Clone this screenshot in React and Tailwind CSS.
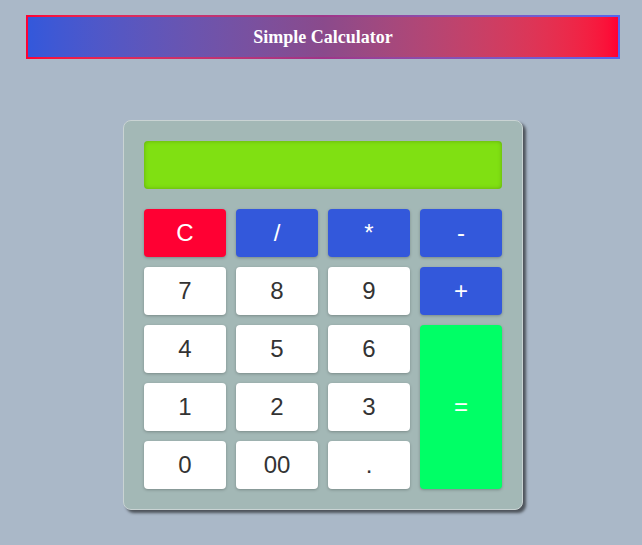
export default function App() {
  const white = "bg-white text-[#333]";
  const blue = "bg-[#3358db] text-white";
  const keys = [
    ["C", "bg-[#ff0033] text-white"],
    ["/", blue],
    ["*", blue],
    ["-", blue],
    ["7", white],
    ["8", white],
    ["9", white],
    ["+", blue],
    ["4", white],
    ["5", white],
    ["6", white],
    ["=", "bg-[#00ff66] text-white row-span-3"],
    ["1", white],
    ["2", white],
    ["3", white],
    ["0", white],
    ["00", white],
    [".", white],
  ];
  return (
    <div className="min-h-screen w-full bg-[#aab8c8] pt-[15px] pb-[35px]">
      <div className="ml-[26px] w-[594px] bg-gradient-to-r from-[#ff0033] via-[#a03488] to-[#5566ee] p-[2px]">
        <div className="h-[40px] flex items-center justify-center bg-gradient-to-r from-[#3358db] via-[#8a4a8c] to-[#ff0033]">
          <h1 className="text-white font-bold text-[18px] font-['Liberation_Serif',serif]">Simple Calculator</h1>
        </div>
      </div>
      <div className="ml-[123px] mt-[61px] w-[400px] rounded-[8px] border border-[#c9d3d3] bg-[#a3b8b6] p-[20px] shadow-[3px_3px_3px_rgba(0,0,0,0.55)]">
        <div className="h-[48px] rounded-[4px] bg-[#80e012] shadow-[inset_0_0_4px_rgba(0,0,0,0.25)]"></div>
        <div className="mt-[20px] grid grid-cols-[82px_82px_82px_82px] auto-rows-[48px] gap-[10px]">
          {keys.map(([k, c]) => (
            <button
              key={k}
              className={`${c} rounded-[4px] text-[24px] font-['Liberation_Sans',Arial,sans-serif] shadow-[0_1px_3px_rgba(0,0,0,0.25)] flex items-center justify-center`}
            >
              {k}
            </button>
          ))}
        </div>
      </div>
    </div>
  );
}
